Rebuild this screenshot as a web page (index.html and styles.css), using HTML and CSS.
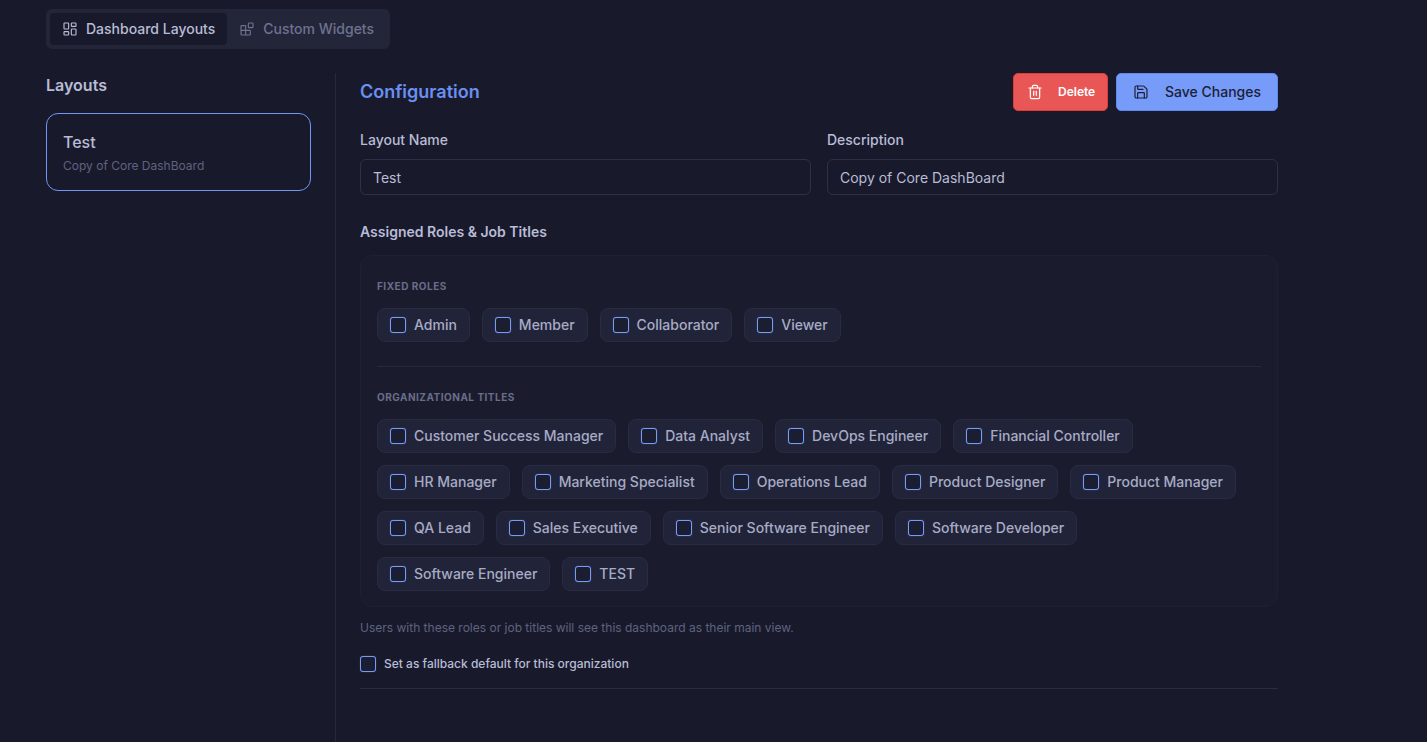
FILE: index.html
```html
<!DOCTYPE html>
<html lang="en">
<head>
<meta charset="utf-8">
<title>Dashboard Layouts</title>
<link rel="stylesheet" href="styles.css">
</head>
<body>
<div class="page">
  <nav class="tabs">
    <button class="tab active">
      <svg class="tab-icon" viewBox="0 0 24 24"><rect x="3" y="3" width="7" height="9" rx="1"/><rect x="14" y="3" width="7" height="5" rx="1"/><rect x="14" y="12" width="7" height="9" rx="1"/><rect x="3" y="16" width="7" height="5" rx="1"/></svg>
      Dashboard Layouts
    </button>
    <button class="tab">
      <svg class="tab-icon" viewBox="0 0 24 24"><rect x="14" y="3" width="7" height="7" rx="1"/><path d="M10 21V8a1 1 0 0 0-1-1H4a1 1 0 0 0-1 1v12a1 1 0 0 0 1 1h12a1 1 0 0 0 1-1v-5a1 1 0 0 0-1-1H3"/></svg>
      Custom Widgets
    </button>
  </nav>
  <div class="columns">
    <aside class="sidebar">
      <h2 class="side-title">Layouts</h2>
      <div class="layout-card">
        <div class="layout-name">Test</div>
        <div class="layout-desc">Copy of Core DashBoard</div>
      </div>
    </aside>
    <main class="main">
      <header class="main-head">
        <h1 class="main-title">Configuration</h1>
        <div class="actions">
          <button class="btn btn-delete">
            <svg class="btn-icon" viewBox="0 0 24 24"><path d="M3 6h18"/><path d="M19 6v14a2 2 0 0 1-2 2H7a2 2 0 0 1-2-2V6"/><path d="M8 6V4a2 2 0 0 1 2-2h4a2 2 0 0 1 2 2v2"/><path d="M10 11v6"/><path d="M14 11v6"/></svg>
            Delete
          </button>
          <button class="btn btn-save">
            <svg class="btn-icon" viewBox="0 0 24 24"><path d="M15.2 3a2 2 0 0 1 1.4.6l3.8 3.8a2 2 0 0 1 .6 1.4V19a2 2 0 0 1-2 2H5a2 2 0 0 1-2-2V5a2 2 0 0 1 2-2z"/><path d="M17 21v-7a1 1 0 0 0-1-1H8a1 1 0 0 0-1 1v7"/><path d="M7 3v4a1 1 0 0 0 1 1h7"/></svg>
            Save Changes
          </button>
        </div>
      </header>
      <div class="fields">
        <label class="field">
          <span class="field-label">Layout Name</span>
          <input class="text-input" type="text" value="Test">
        </label>
        <label class="field">
          <span class="field-label">Description</span>
          <input class="text-input" type="text" value="Copy of Core DashBoard">
        </label>
      </div>
      <h3 class="section-title">Assigned Roles &amp; Job Titles</h3>
      <section class="panel">
        <h4 class="group-title">FIXED ROLES</h4>
        <div class="chips">
          <label class="chip"><span class="box"></span>Admin</label>
          <label class="chip"><span class="box"></span>Member</label>
          <label class="chip"><span class="box"></span>Collaborator</label>
          <label class="chip"><span class="box"></span>Viewer</label>
        </div>
        <hr class="panel-rule">
        <h4 class="group-title">ORGANIZATIONAL TITLES</h4>
        <div class="chips">
          <label class="chip"><span class="box"></span>Customer Success Manager</label>
          <label class="chip"><span class="box"></span>Data Analyst</label>
          <label class="chip"><span class="box"></span>DevOps Engineer</label>
          <label class="chip"><span class="box"></span>Financial Controller</label>
          <label class="chip"><span class="box"></span>HR Manager</label>
          <label class="chip"><span class="box"></span>Marketing Specialist</label>
          <label class="chip"><span class="box"></span>Operations Lead</label>
          <label class="chip"><span class="box"></span>Product Designer</label>
          <label class="chip"><span class="box"></span>Product Manager</label>
          <label class="chip"><span class="box"></span>QA Lead</label>
          <label class="chip"><span class="box"></span>Sales Executive</label>
          <label class="chip"><span class="box"></span>Senior Software Engineer</label>
          <label class="chip"><span class="box"></span>Software Developer</label>
          <label class="chip"><span class="box"></span>Software Engineer</label>
          <label class="chip"><span class="box"></span>TEST</label>
        </div>
      </section>
      <p class="hint">Users with these roles or job titles will see this dashboard as their main view.</p>
      <label class="fallback"><span class="box"></span>Set as fallback default for this organization</label>
      <hr class="main-rule">
    </main>
  </div>
</div>
</body>
</html>
```

FILE: styles.css
```css
* { box-sizing: border-box; }
html, body { margin: 0; height: 100%; overflow: hidden; }
body {
  background: #181a2b;
  color: #b9bcd6;
  font-family: Inter, "Noto Sans", sans-serif;
}
.page {
  display: flex;
  flex-direction: column;
  height: 742px;
  padding: 9px 149px 0 46px;
}
.tabs {
  display: flex;
  align-self: flex-start;
  gap: 0;
  padding: 4px;
  height: 40px;
  background: #232539;
  border-radius: 6px;
}
.tab {
  display: flex;
  align-items: center;
  gap: 8px;
  height: 32px;
  padding: 0 12px;
  border: 0;
  border-radius: 4px;
  background: transparent;
  color: #6f7290;
  font: 500 14px/16px Inter, sans-serif;
}
.tab.active { background: #181a2b; color: #b9bcd6; }
.tab-icon {
  flex: none;
  width: 16px;
  height: 16px;
  fill: none;
  stroke: currentColor;
  stroke-width: 1.7;
  stroke-linecap: round;
  stroke-linejoin: round;
}
.columns { display: flex; flex: 1; margin-top: 24px; min-height: 0; }
.sidebar {
  width: 290px;
  padding-right: 24px;
  border-right: 1px solid #26283c;
}
.side-title {
  margin: 3px 0 18px;
  font-size: 16px;
  line-height: 19px;
  font-weight: 600;
  color: #b9bcd6;
}
.layout-card {
  width: 265px;
  height: 78px;
  padding: 17px 16px;
  border: 1px solid #6f95f5;
  border-radius: 12px;
}
.layout-name { font-size: 16px; line-height: 22px; font-weight: 500; color: #b9bcd6; }
.layout-desc { margin-top: 5px; font-size: 12px; line-height: 16px; color: #5f6280; }
.main { flex: 1; padding-left: 24px; min-width: 0; }
.main-head { display: flex; justify-content: space-between; height: 38px; }
.main-title { margin: 8px 0 0; font-size: 18px; line-height: 22px; font-weight: 600; color: #6b8ff2; }
.actions { display: flex; gap: 8px; }
.btn {
  display: flex;
  align-items: center;
  height: 38px;
  border-radius: 5px;
  font-family: Inter, sans-serif;
  line-height: 16px;
}
.btn-icon {
  flex: none;
  width: 16px;
  height: 16px;
  fill: none;
  stroke: currentColor;
  stroke-width: 1.8;
  stroke-linecap: round;
  stroke-linejoin: round;
}
.btn-delete {
  width: 95px;
  padding: 0 0 0 13px;
  gap: 15px;
  background: #e85656;
  border: 1px solid #e03c3c;
  color: #fff;
  font-size: 12px;
  font-weight: 600;
}
.btn-save {
  width: 162px;
  padding: 0 0 0 16px;
  gap: 16px;
  background: #769bf8;
  border: 1px solid #5f88f0;
  color: #1d2036;
  font-size: 14px;
  font-weight: 500;
}
.fields { display: grid; grid-template-columns: 1fr 1fr; gap: 16px; margin-top: 19px; }
.field { display: flex; flex-direction: column; }
.field-label { font-size: 14px; line-height: 19px; font-weight: 500; color: #b9bcd6; margin-bottom: 10px; }
.text-input {
  width: 100%;
  height: 36px;
  padding: 0 12px;
  background: transparent;
  border: 1px solid #2e304a;
  border-radius: 6px;
  color: #b9bcd6;
  font: 400 14px Inter, sans-serif;
  outline: none;
}
.section-title { margin: 28px 0 14px; font-size: 14px; line-height: 18px; font-weight: 600; color: #b9bcd6; }
.panel {
  height: 352px;
  padding: 24px 16px 0;
  background: #1a1c2e;
  border: 1px solid #1e2033;
  border-radius: 12px;
}
.group-title {
  margin: 0 0 16px;
  font-size: 10px;
  line-height: 12px;
  font-weight: 700;
  letter-spacing: 0.5px;
  color: #6a6d88;
}
.chips { display: flex; flex-wrap: wrap; gap: 12px; }
.chip {
  display: flex;
  align-items: center;
  gap: 8px;
  height: 34px;
  padding: 0 12px;
  background: #212439;
  border: 1px solid #282b42;
  border-radius: 8px;
  font-size: 14px;
  line-height: 16px;
  font-weight: 500;
  color: #a8abc5;
}
.box {
  flex: none;
  width: 16px;
  height: 16px;
  border: 1px solid #769bf8;
  border-radius: 3px;
  background: #1b1d30;
  box-shadow: 0 0 1px rgba(118, 155, 248, 0.7);
}
.panel-rule { height: 1px; margin: 24px 0; border: 0; background: #26283f; }
.hint { margin: 13px 0 0; font-size: 12px; line-height: 16px; color: #5f6280; }
.fallback {
  display: flex;
  align-items: center;
  gap: 8px;
  margin-top: 20px;
  font-size: 12px;
  line-height: 16px;
  font-weight: 500;
  color: #b9bcd6;
}
.main-rule { height: 1px; margin: 16px 0 0; border: 0; background: #2a2c42; }
```
